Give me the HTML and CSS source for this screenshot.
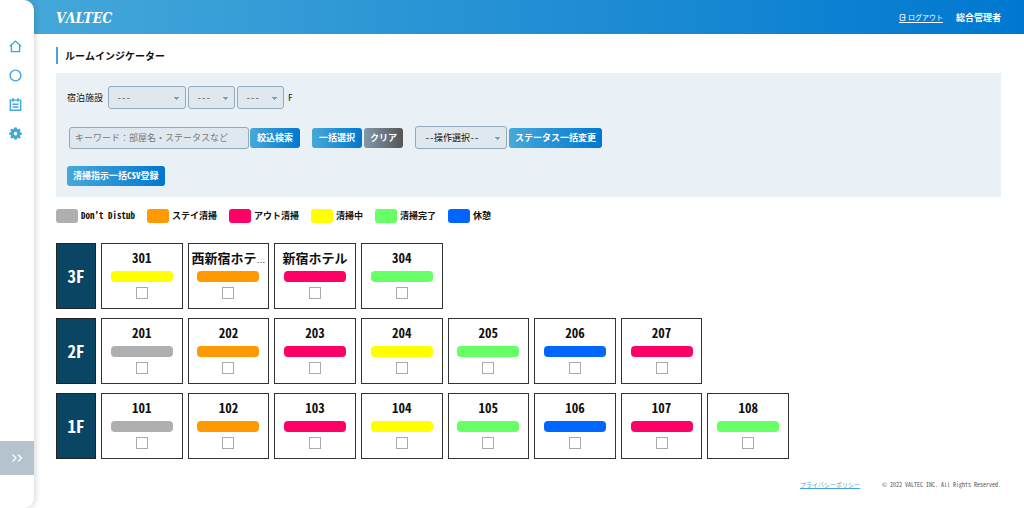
FILE: index.html
```html
<!DOCTYPE html>
<html lang="ja">
<head>
<meta charset="utf-8">
<meta name="viewport" content="width=device-width, initial-scale=1">
<title>ルームインジケーター | VALTEC</title>
<link rel="stylesheet" href="styles.css">
</head>
<body>
<div class="app">
  <nav class="sidebar" aria-label="メインメニュー">
    <ul class="menu">
      <li><a href="#" aria-label="ホーム"><svg class="icon" viewBox="0 0 24 24" fill="none" stroke="currentColor" stroke-width="2.6"><path d="M1.500 11.500 12 2 22.500 11.500M4.500 9.500V21.500H19.500V9.500"/></svg></a></li>
      <li><a href="#" aria-label="ルーム"><svg class="icon" viewBox="0 0 24 24" fill="none" stroke="currentColor" stroke-width="2.6"><circle cx="12" cy="12" r="10"/></svg></a></li>
      <li><a href="#" aria-label="清掃"><svg class="icon" viewBox="0 0 24 24" fill="none" stroke="currentColor" stroke-width="2.6"><path d="M2.500 4H21.500V22.500H2.500ZM7.500 0V7M16.500 0V7M6.500 11.500H17.500M6.500 16.500H17.500"/></svg></a></li>
      <li><a href="#" aria-label="設定"><svg class="icon" viewBox="0 0 24 24"><path fill="currentColor" fill-rule="evenodd" d="M9.500 1h5l.6 2.800 1.500.7L19 2.800 21.800 5.800 20 8l.7 1.600 2.800.4v4.500l-2.800.4L20 16.500l1.800 2.200L19 21.500l-2.400-1.700-1.500.7-.6 2.800h-5l-.6-2.800-1.500-.7L5 21.500 2.200 18.700 4 16.500l-.7-1.600-2.800-.4V10l2.800-.4L4 8 2.200 5.800 5 2.800l2.400 1.700 1.500-.7ZM12 8.800a3.400 3.400 0 1 0 0 6.800 3.400 3.400 0 0 0 0-6.800Z"/></svg></a></li>
    </ul>
    <button class="toggle" type="button" aria-label="メニューを開く"><svg class="toggle-icon" viewBox="0 0 12 10" fill="none" stroke="currentColor" stroke-width="1.2"><path d="M1.500 1.500 5 5 1.500 8.500M7 1.500 10.500 5 7 8.500"/></svg></button>
  </nav>
  <div class="page">
    <header class="header">
      <a class="logo" href="#">VΛLTEC</a>
      <div class="account">
        <a class="logout" href="#"><svg class="logout-icon" viewBox="0 0 12 12" fill="none" stroke="currentColor" stroke-width="1.5"><path d="M10 4V1H2V11H10V8M5 6H11M9 4 11 6 9 8"/></svg>ログアウト</a>
        <span class="user">総合管理者</span>
      </div>
    </header>
    <main class="main">
      <h1 class="title">ルームインジケーター</h1>
      <form class="panel">
        <div class="row">
          <label class="label" for="facility">宿泊施設</label>
          <select class="select select-wide" id="facility"><option>---</option></select>
          <select class="select" aria-label="棟"><option>---</option></select>
          <select class="select" id="floor"><option>---</option></select>
          <label class="label-floor" for="floor">F</label>
        </div>
        <div class="row row-tools">
          <div class="group group-search">
            <input class="keyword" type="text" aria-label="キーワード" placeholder="キーワード：部屋名・ステータスなど">
            <button class="button" type="button">絞込検索</button>
          </div>
          <div class="group">
            <button class="button" type="button">一括選択</button>
            <button class="button button-clear" type="reset">クリア</button>
          </div>
          <div class="group">
            <select class="select select-action" aria-label="操作選択"><option>--操作選択--</option></select>
            <button class="button" type="button">ステータス一括変更</button>
          </div>
        </div>
        <div class="row">
          <button class="button" type="button">清掃指示一括CSV登録</button>
        </div>
      </form>
      <ul class="legend">
        <li><span class="swatch gray"></span>Don't Distub</li>
        <li><span class="swatch orange"></span>ステイ清掃</li>
        <li><span class="swatch pink"></span>アウト清掃</li>
        <li><span class="swatch yellow"></span>清掃中</li>
        <li><span class="swatch green"></span>清掃完了</li>
        <li><span class="swatch blue"></span>休憩</li>
      </ul>
      <div class="floors">
        <section class="floor">
          <h2 class="floor-name">3F</h2>
          <div class="rooms">
            <label class="room"><span class="room-name">301</span><span class="bar yellow"></span><input class="check" type="checkbox"></label>
            <label class="room"><span class="room-name">西新宿ホテ<span class="more">…</span></span><span class="bar orange"></span><input class="check" type="checkbox"></label>
            <label class="room"><span class="room-name">新宿ホテル</span><span class="bar pink"></span><input class="check" type="checkbox"></label>
            <label class="room"><span class="room-name">304</span><span class="bar green"></span><input class="check" type="checkbox"></label>
          </div>
        </section>
        <section class="floor">
          <h2 class="floor-name">2F</h2>
          <div class="rooms">
            <label class="room"><span class="room-name">201</span><span class="bar gray"></span><input class="check" type="checkbox"></label>
            <label class="room"><span class="room-name">202</span><span class="bar orange"></span><input class="check" type="checkbox"></label>
            <label class="room"><span class="room-name">203</span><span class="bar pink"></span><input class="check" type="checkbox"></label>
            <label class="room"><span class="room-name">204</span><span class="bar yellow"></span><input class="check" type="checkbox"></label>
            <label class="room"><span class="room-name">205</span><span class="bar green"></span><input class="check" type="checkbox"></label>
            <label class="room"><span class="room-name">206</span><span class="bar blue"></span><input class="check" type="checkbox"></label>
            <label class="room"><span class="room-name">207</span><span class="bar pink"></span><input class="check" type="checkbox"></label>
          </div>
        </section>
        <section class="floor">
          <h2 class="floor-name">1F</h2>
          <div class="rooms">
            <label class="room"><span class="room-name">101</span><span class="bar gray"></span><input class="check" type="checkbox"></label>
            <label class="room"><span class="room-name">102</span><span class="bar orange"></span><input class="check" type="checkbox"></label>
            <label class="room"><span class="room-name">103</span><span class="bar pink"></span><input class="check" type="checkbox"></label>
            <label class="room"><span class="room-name">104</span><span class="bar yellow"></span><input class="check" type="checkbox"></label>
            <label class="room"><span class="room-name">105</span><span class="bar green"></span><input class="check" type="checkbox"></label>
            <label class="room"><span class="room-name">106</span><span class="bar blue"></span><input class="check" type="checkbox"></label>
            <label class="room"><span class="room-name">107</span><span class="bar pink"></span><input class="check" type="checkbox"></label>
            <label class="room"><span class="room-name">108</span><span class="bar green"></span><input class="check" type="checkbox"></label>
          </div>
        </section>
      </div>
    </main>
    <footer class="footer">
      <a class="policy" href="#">プライバシーポリシー</a>
      <small class="copyright">© 2022 VALTEC INC. All Rights Reserved.</small>
    </footer>
  </div>
</div>
</body>
</html>
```
FILE: styles.css
```css
* {
  box-sizing: border-box;
}

body {
  margin: 0;
  color: #111;
  background: #fff;
  font: 9px/14px "Noto Sans Mono CJK JP", "Noto Sans CJK JP", sans-serif;
  font-feature-settings: "hwid";
}

button, input, select {
  margin: 0;
  font: inherit;
  font-feature-settings: inherit;
}

ul {
  margin: 0;
  padding: 0;
  list-style: none;
}

.app {
  display: flex;
  min-height: 100vh;
  background: linear-gradient(90deg, #47a9d9, #0078d0) 0 0 / 100% 34px no-repeat;
}

.sidebar {
  display: flex;
  flex: none;
  flex-direction: column;
  justify-content: space-between;
  width: 34px;
  padding: 40px 0 33px;
  background: #fff;
  border-radius: 0 10px 10px 0;
  box-shadow: 1px 0 6px rgba(0, 0, 0, .18);
}

.menu {
  display: grid;
  gap: 16px;
  padding-left: 9px;
}

.menu a {
  display: block;
  color: #43a7d7;
}

.icon {
  display: block;
  width: 13px;
  height: 13px;
}

.toggle {
  display: grid;
  place-items: center;
  height: 34px;
  padding: 0;
  color: #fff;
  background: #b4c3ce;
  border: 0;
}

.toggle-icon {
  width: 12px;
  height: 10px;
}

.page {
  display: flex;
  flex: 1;
  flex-direction: column;
  min-width: 0;
  padding: 0 23px 0 22px;
}

.header {
  display: flex;
  align-items: center;
  justify-content: space-between;
  height: 34px;
  padding-top: 2px;
  color: #fff;
}

.logo {
  color: inherit;
  font: italic bold 14px/20px "DejaVu Serif Condensed", "DejaVu Serif", serif;
  text-decoration: none;
}

.account {
  display: flex;
  gap: 13px;
  align-items: center;
}

.logout {
  display: flex;
  gap: 2px;
  align-items: center;
  color: inherit;
  font-size: 7px;
  line-height: 9px;
  text-decoration: none;
  border-bottom: 1px solid;
}

.logout-icon {
  width: 7px;
  height: 7px;
}

.user {
  font-weight: bold;
}

.main {
  flex: 1;
  padding-top: 13px;
}

.title {
  margin: 0 0 9px;
  padding-left: 7px;
  font-size: 10px;
  line-height: 17px;
  border-left: 2px solid #43a7d7;
}

.panel {
  display: grid;
  gap: 17px;
  padding: 13px 11px 11px;
  background: #e9f0f6;
}

.row {
  display: flex;
  gap: 2px;
  align-items: center;
}

.row-tools {
  flex-wrap: wrap;
  gap: 12px;
}

.label {
  padding-right: 3px;
}

.label-floor {
  padding-left: 2px;
}

.group {
  display: flex;
  gap: 2px;
  align-items: center;
}

.group-search {
  gap: 1px;
  padding-left: 2px;
}

.select {
  width: 47px;
  height: 23px;
  padding: 0 8px;
  color: #555;
  background: linear-gradient(#829bad, #829bad) right 6px top 10px / 5px 1px no-repeat,
    linear-gradient(#829bad, #829bad) right 7px top 11px / 3px 1px no-repeat,
    linear-gradient(#829bad, #829bad) right 8px top 12px / 1px 1px no-repeat,
    #dfe8ef;
  border: 1px solid #93aaba;
  border-radius: 3px;
  appearance: none;
}

.select-wide {
  width: 78px;
}

.select-action {
  width: 92px;
  padding-left: 9px;
  color: #111;
}

.keyword {
  width: 180px;
  height: 22px;
  padding: 0 5px;
  font-feature-settings: normal;
  background: #dfe8ef;
  border: 1px solid #93aaba;
  border-radius: 3px;
}

.keyword::placeholder {
  color: #777;
}

.button {
  min-width: 50px;
  height: 20px;
  padding: 0 6px;
  color: #fff;
  font-weight: bold;
  background: linear-gradient(90deg, #47a9d9, #0078d0);
  border: 0;
  border-radius: 3px;
}

.button-clear {
  min-width: 39px;
  background: linear-gradient(90deg, #8299ab, #555);
}

.legend {
  display: flex;
  flex-wrap: wrap;
  gap: 12px;
  padding: 12px 0 20px;
  font-weight: bold;
}

.legend li {
  display: flex;
  gap: 3px;
  align-items: center;
}

.swatch {
  width: 22px;
  height: 14px;
  border-radius: 3px;
}

.floors {
  display: grid;
  gap: 9px;
}

.floor {
  display: flex;
  gap: 5px;
}

.floor-name {
  display: grid;
  flex: none;
  place-items: center;
  width: 40px;
  margin: 0;
  color: #fff;
  font-size: 17px;
  background: #0b4564;
  border: 1px solid #222;
}

.rooms {
  display: grid;
  flex: 1;
  grid-template-columns: repeat(8, minmax(0, 1fr));
  gap: 5px;
  max-width: 688px;
}

.room {
  display: flex;
  flex-direction: column;
  gap: 3px;
  align-items: center;
  padding: 4px 2px 9px;
  border: 1px solid #333;
}

.room-name {
  font-size: 13px;
  font-weight: bold;
  line-height: 20px;
  white-space: nowrap;
}

.more {
  font: 9px/9px "Liberation Sans", sans-serif;
}

.bar {
  width: 62px;
  height: 11px;
  border-radius: 4px;
}

.check {
  width: 12px;
  height: 12px;
  margin-top: 2px;
  background: #fff;
  border: 1px solid #aaa;
  appearance: none;
}

.check:checked {
  background: #43a7d7;
}

.gray { background: #afafaf; }
.orange { background: #f90; }
.pink { background: #f06; }
.yellow { background: #ff0; }
.green { background: #6f6; }
.blue { background: #06f; }

.footer {
  display: flex;
  gap: 22px;
  justify-content: flex-end;
  padding-bottom: 17px;
  font-size: 6px;
  line-height: 12px;
}

.policy {
  color: #43a7d7;
}

.copyright {
  color: #555;
  font-size: 6px;
}
```
